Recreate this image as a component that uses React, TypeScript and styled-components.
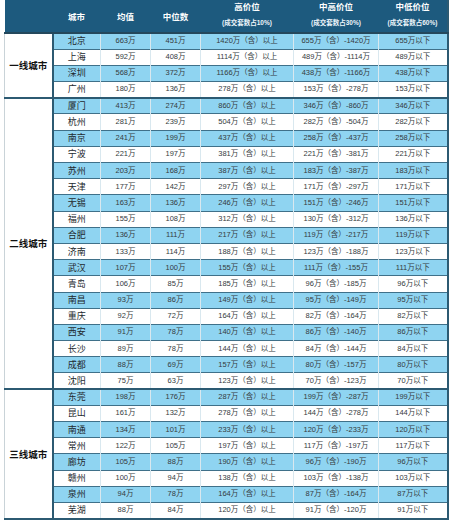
import React from 'react';
import styled, { createGlobalStyle } from 'styled-components';

const GlobalStyle = createGlobalStyle`
  html, body {
    margin: 0;
    padding: 0;
    background: #ffffff;
  }
  body {
    font-family: "Liberation Sans", "Noto Sans CJK SC", sans-serif;
  }
`;

// city, mean, median, high floor, mid-high floor, low ceiling
type PriceRow = [string, string, string, string, string, string];

interface CityGroup {
  name: string;
  rows: PriceRow[];
}

const groups: CityGroup[] = [
  {
    name: '一线城市',
    rows: [
      ['北京', '663', '451', '1420', '655', '655'],
      ['上海', '592', '408', '1114', '489', '489'],
      ['深圳', '568', '372', '1166', '438', '438'],
      ['广州', '180', '136', '278', '153', '153'],
    ],
  },
  {
    name: '二线城市',
    rows: [
      ['厦门', '413', '274', '860', '346', '346'],
      ['杭州', '281', '239', '504', '282', '282'],
      ['南京', '241', '199', '437', '258', '258'],
      ['宁波', '221', '197', '381', '221', '221'],
      ['苏州', '203', '168', '387', '183', '183'],
      ['天津', '177', '142', '297', '171', '171'],
      ['无锡', '163', '136', '246', '151', '151'],
      ['福州', '155', '108', '312', '130', '136'],
      ['合肥', '136', '111', '217', '119', '119'],
      ['济南', '133', '114', '188', '123', '123'],
      ['武汉', '107', '100', '155', '111', '111'],
      ['青岛', '106', '85', '185', '96', '96'],
      ['南昌', '93', '86', '149', '95', '95'],
      ['重庆', '92', '72', '164', '82', '82'],
      ['西安', '91', '78', '140', '86', '86'],
      ['长沙', '89', '78', '144', '84', '84'],
      ['成都', '88', '69', '157', '80', '80'],
      ['沈阳', '75', '63', '123', '70', '70'],
    ],
  },
  {
    name: '三线城市',
    rows: [
      ['东莞', '198', '176', '287', '199', '199'],
      ['昆山', '161', '132', '278', '144', '144'],
      ['南通', '134', '101', '233', '120', '120'],
      ['常州', '122', '105', '197', '117', '117'],
      ['廊坊', '105', '88', '190', '96', '96'],
      ['赣州', '100', '94', '138', '103', '103'],
      ['泉州', '94', '78', '164', '87', '87'],
      ['芜湖', '88', '84', '120', '91', '91'],
    ],
  },
];

const columnWidths = [48, 48, 50, 50, 93, 85, 69];

const Page = styled.div`
  padding: 0 3px 0 4px;
`;

const Table = styled.table`
  width: 443px;
  table-layout: fixed;
  border-collapse: collapse;
  border-right: 2px solid #2c5a72;
  border-bottom: 2px solid #2c5a72;
`;

const HeadRow = styled.tr`
  background: #1d5a7e;
  height: 33px;
`;

const HeadCell = styled.th<{ $stacked?: boolean }>`
  padding: 0;
  vertical-align: ${(p) => (p.$stacked ? 'top' : 'middle')};
  color: #ffffff;
  font-size: 8.5px;
  font-weight: bold;
  text-align: center;
  border-bottom: 2px solid #24485c;
`;

const HeadTitle = styled.div`
  line-height: 15px;
`;

const HeadNote = styled.div`
  line-height: 15px;
  font-size: 6.5px;
  font-weight: bold;
  color: #eef6fb;
`;

const DataRow = styled.tr<{ $blue: boolean; $first: boolean }>`
  height: 16.2px;
  background: ${(p) => (p.$blue ? '#8fd4f1' : '#ffffff')};
  border-top: ${(p) => (p.$first ? '2px solid #2c5a72' : '1px solid #3f7089')};
`;

const GroupCell = styled.td`
  background: #ffffff;
  border-left: 1px solid #c9d3d8;
  border-right: 2px solid #2c5a72;
  color: #111111;
  font-size: 9.5px;
  font-weight: bold;
  text-align: center;
  vertical-align: middle;
`;

const Cell = styled.td<{ $city?: boolean }>`
  padding: 0;
  line-height: 14px;
  border-left: 1px solid #d9e8ef;
  color: ${(p) => (p.$city ? '#23292e' : '#353b40')};
  font-size: ${(p) => (p.$city ? '9px' : '7.5px')};
  text-align: center;
  white-space: nowrap;
`;

export default function App() {
  return (
    <Page>
      <GlobalStyle />
      <Table>
        <colgroup>
          {columnWidths.map((w, i) => (
            <col key={i} style={{ width: w }} />
          ))}
        </colgroup>
        <thead>
          <HeadRow>
            <HeadCell />
            <HeadCell>城市</HeadCell>
            <HeadCell>均值</HeadCell>
            <HeadCell>中位数</HeadCell>
            <HeadCell $stacked>
              <HeadTitle>高价位</HeadTitle>
              <HeadNote>(成交套数占10%)</HeadNote>
            </HeadCell>
            <HeadCell $stacked>
              <HeadTitle>中高价位</HeadTitle>
              <HeadNote>(成交套数占30%)</HeadNote>
            </HeadCell>
            <HeadCell $stacked>
              <HeadTitle>中低价位</HeadTitle>
              <HeadNote>(成交套数占60%)</HeadNote>
            </HeadCell>
          </HeadRow>
        </thead>
        <tbody>
          {groups.map((g) =>
            g.rows.map((r, i) => (
              <DataRow key={g.name + r[0]} $blue={i % 2 === 0} $first={i === 0}>
                {i === 0 && <GroupCell rowSpan={g.rows.length}>{g.name}</GroupCell>}
                <Cell $city>{r[0]}</Cell>
                <Cell>{r[1]}万</Cell>
                <Cell>{r[2]}万</Cell>
                <Cell>{r[3]}万（含）以上</Cell>
                <Cell>{r[4]}万（含）-{r[3]}万</Cell>
                <Cell>{r[5]}万以下</Cell>
              </DataRow>
            ))
          )}
        </tbody>
      </Table>
    </Page>
  );
}
